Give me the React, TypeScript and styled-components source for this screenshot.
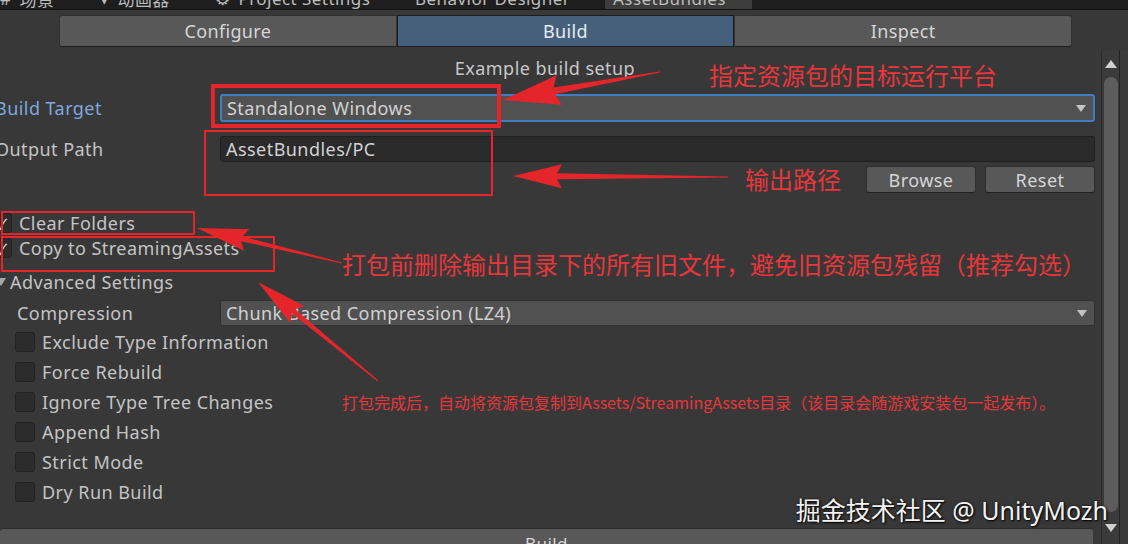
import React from "react";
import styled, { createGlobalStyle } from "styled-components";

const GlobalStyle = createGlobalStyle`
  html, body {
    margin: 0;
    padding: 0;
    background: #383838;
    overflow: hidden;
  }
  body {
    font-family: "Noto Sans", "Noto Sans CJK SC", sans-serif;
  }
`;

const RED = "#e4262b";

const Window = styled.div`
  position: relative;
  width: 1128px;
  height: 544px;
  overflow: hidden;
  background: #383838;
  display: flex;
  flex-direction: column;
  color: #c4c4c4;
  letter-spacing: 0.45px;
`;

/* editor dock tabs, mostly scrolled out of view */
const DockBar = styled.div`
  flex: none;
  height: 22px;
  margin-top: -13px;
  display: flex;
  background: #1e1e1e;
  border-bottom: 1px solid #141414;
`;

const DockTab = styled.div<{ $w: number; $pad: number; $active?: boolean }>`
  width: ${(p) => p.$w}px;
  padding-left: ${(p) => p.$pad}px;
  box-sizing: border-box;
  display: flex;
  align-items: center;
  gap: 8px;
  font-size: 17px;
  color: #bdbdbd;
  background: ${(p) => (p.$active ? "#3c3c3c" : "transparent")};
  white-space: nowrap;
`;

const Toolbar = styled.div`
  flex: none;
  display: flex;
  height: 32px;
  margin: 5px 56px 0 59px;
`;

const ToolButton = styled.div<{ $active?: boolean }>`
  flex: 1;
  display: flex;
  align-items: center;
  justify-content: center;
  font-size: 18px;
  letter-spacing: 0.35px;
  color: ${(p) => (p.$active ? "#e6edf5" : "#d6d6d6")};
  background: ${(p) => (p.$active ? "#46607c" : "#585858")};
  border: 1px solid ${(p) => (p.$active ? "#1c1c1c" : "#303030")};
  border-bottom-color: #1f1f1f;
  &:first-child {
    border-radius: 3px 0 0 3px;
  }
  &:last-child {
    border-radius: 0 3px 3px 0;
  }
`;

const Main = styled.div`
  flex: 1;
  display: flex;
  min-height: 0;
  margin-top: 3px;
`;

const Column = styled.div`
  flex: 1;
  display: flex;
  flex-direction: column;
  min-width: 0;
`;

const ScrollContent = styled.div`
  flex: 1;
  display: flex;
  flex-direction: column;
  padding: 7px 3px 0 0;
  margin-left: -5px;
`;

const Title = styled.div`
  text-align: center;
  font-size: 18px;
  line-height: 22px;
  color: #c8c8c8;
`;

const FieldRow = styled.div<{ $mt: number; $h: number }>`
  display: grid;
  grid-template-columns: 225px 1fr;
  align-items: center;
  height: ${(p) => p.$h}px;
  margin-top: ${(p) => p.$mt}px;
`;

const Label = styled.div<{ $accent?: boolean; $indent?: number }>`
  font-size: 18px;
  padding-left: ${(p) => p.$indent ?? 0}px;
  color: ${(p) => (p.$accent ? "#7fa6df" : "#c4c4c4")};
  white-space: nowrap;
`;

const Dropdown = styled.div<{ $focused?: boolean }>`
  height: 100%;
  box-sizing: border-box;
  display: flex;
  align-items: center;
  justify-content: space-between;
  padding: 0 7px 0 5px;
  font-size: 18px;
  color: #d2d2d2;
  background: #515151;
  border: ${(p) => (p.$focused ? "2px solid #3f7cc0" : "1px solid #2f2f2f")};
  border-radius: 3px;
`;

const Caret = styled.span`
  width: 0;
  height: 0;
  border-left: 5px solid transparent;
  border-right: 5px solid transparent;
  border-top: 7px solid #c4c4c4;
`;

const TextField = styled.div`
  height: 100%;
  box-sizing: border-box;
  display: flex;
  align-items: center;
  padding-left: 5px;
  font-size: 18px;
  color: #d2d2d2;
  background: #2a2a2a;
  border: 1px solid #1f1f1f;
  border-radius: 3px;
`;

const ButtonRow = styled.div`
  display: flex;
  justify-content: flex-end;
  gap: 9px;
  margin-top: 5px;
  height: 27px;
`;

const SmallButton = styled.div`
  width: 108px;
  display: flex;
  align-items: center;
  justify-content: center;
  font-size: 18px;
  color: #d6d6d6;
  background: #585858;
  border: 1px solid #2f2f2f;
  border-bottom-color: #222;
  border-radius: 3px;
`;

const CheckRow = styled.div<{ $mt: number; $h: number; $indent: number }>`
  display: flex;
  align-items: center;
  gap: 7px;
  height: ${(p) => p.$h}px;
  margin-top: ${(p) => p.$mt}px;
  margin-left: ${(p) => p.$indent}px;
  font-size: 18px;
  color: #c4c4c4;
`;

const Box = styled.span`
  flex: none;
  width: 20px;
  height: 20px;
  box-sizing: border-box;
  display: flex;
  align-items: center;
  justify-content: center;
  background: #2c2c2c;
  border: 1px solid #232323;
  border-radius: 3px;
  color: #e6e6e6;
  font-size: 15px;
`;

const Foldout = styled.div<{ $mt: number }>`
  display: flex;
  align-items: center;
  gap: 4px;
  height: 22px;
  margin-top: ${(p) => p.$mt}px;
  margin-left: 1px;
  font-size: 18px;
  color: #c4c4c4;
`;

const FoldCaret = styled.span`
  width: 0;
  height: 0;
  border-left: 5px solid transparent;
  border-right: 5px solid transparent;
  border-top: 8px solid #a8a8a8;
`;

const BuildBar = styled.div`
  flex: none;
  height: 28px;
  margin: 0 5px -13px 0;
  display: flex;
  align-items: center;
  justify-content: center;
  font-size: 17px;
  color: #d6d6d6;
  background: #585858;
  border-top: 1px solid #2a2a2a;
  border-radius: 3px 3px 0 0;
`;

const Scrollbar = styled.div`
  flex: none;
  width: 17px;
  margin-left: 3px;
  display: flex;
  flex-direction: column;
  align-items: center;
  background: #3a3a3a;
  border-left: 1px solid #2c2c2c;
`;

const ScrollArrow = styled.div<{ $h: number; $down?: boolean }>`
  flex: none;
  height: ${(p) => p.$h}px;
  display: flex;
  align-items: center;
  justify-content: center;
  &::after {
    content: "";
    border-left: 6px solid transparent;
    border-right: 6px solid transparent;
    ${(p) =>
      p.$down
        ? "border-top: 8px solid #d0d0d0;"
        : "border-bottom: 8px solid #d0d0d0;"}
  }
`;

const Thumb = styled.div`
  flex: 1;
  width: 14px;
  background: #5c5c5c;
  border-radius: 7px;
`;

const RightEdge = styled.div`
  flex: none;
  width: 8px;
  background: #3a3a3a;
  border-left: 1px solid #232323;
`;

/* red callouts drawn on top of the screenshot */
const Overlay = styled.svg`
  position: absolute;
  left: 0;
  top: 0;
  pointer-events: none;
`;

const Note = styled.div<{ $x: number; $y: number; $size: number }>`
  position: absolute;
  left: ${(p) => p.$x}px;
  top: ${(p) => p.$y}px;
  font-family: "Noto Sans CJK SC", "Noto Sans", sans-serif;
  font-size: ${(p) => p.$size}px;
  line-height: ${(p) => p.$size + 4}px;
  letter-spacing: 0;
  color: #e8363b;
  white-space: nowrap;
`;

const Watermark = styled.div`
  position: absolute;
  right: 20px;
  top: 495px;
  font-family: "Noto Sans", "Noto Sans CJK SC", sans-serif;
  font-size: 25px;
  line-height: 30px;
  letter-spacing: 0;
  color: #f2f2f2;
  text-shadow: 1px 1px 2px #000, 0 0 3px rgba(0, 0, 0, 0.6);
  white-space: nowrap;
`;

const arrow = (
  tx: number,
  ty: number,
  hx: number,
  hy: number,
  headLen: number,
  headW: number,
  shaftW: number
) => {
  const dx = hx - tx;
  const dy = hy - ty;
  const len = Math.hypot(dx, dy);
  const ux = dx / len;
  const uy = dy / len;
  const nx = -uy;
  const ny = ux;
  const bx = hx - ux * headLen;
  const by = hy - uy * headLen;
  const back = 5;
  const pts = [
    [tx + nx * 0.6, ty + ny * 0.6],
    [bx + nx * (shaftW / 2), by + ny * (shaftW / 2)],
    [bx - ux * back + nx * (headW / 2), by - uy * back + ny * (headW / 2)],
    [hx, hy],
    [bx - ux * back - nx * (headW / 2), by - uy * back - ny * (headW / 2)],
    [bx - nx * (shaftW / 2), by - ny * (shaftW / 2)],
    [tx - nx * 0.6, ty - ny * 0.6],
  ];
  return pts.map((p) => p.map((v) => v.toFixed(1)).join(",")).join(" ");
};

const dockTabs = [
  { w: 95, pad: 0, icon: "#", label: "场景" },
  { w: 115, pad: 5, icon: "▾", label: "动画器" },
  { w: 185, pad: 5, icon: "⚙", label: "Project Settings" },
  { w: 210, pad: 20, icon: "", label: "Behavior Designer" },
  { w: 147, pad: 8, icon: "", label: "AssetBundles", active: true },
];

const advanced = [
  "Exclude Type Information",
  "Force Rebuild",
  "Ignore Type Tree Changes",
  "Append Hash",
  "Strict Mode",
  "Dry Run Build",
];

const App: React.FC = () => {
  return (
    <Window>
      <GlobalStyle />
      <DockBar>
        {dockTabs.map((t) => (
          <DockTab key={t.label} $w={t.w} $pad={t.pad} $active={t.active}>
            {t.icon && <span>{t.icon}</span>}
            <span>{t.label}</span>
          </DockTab>
        ))}
      </DockBar>

      <Toolbar>
        <ToolButton>Configure</ToolButton>
        <ToolButton $active>Build</ToolButton>
        <ToolButton>Inspect</ToolButton>
      </Toolbar>

      <Main>
        <Column>
          <ScrollContent>
            <Title>Example build setup</Title>

            <FieldRow $mt={15} $h={27}>
              <Label $accent>Build Target</Label>
              <Dropdown $focused>
                <span>Standalone Windows</span>
                <Caret />
              </Dropdown>
            </FieldRow>

            <FieldRow $mt={15} $h={25}>
              <Label>Output Path</Label>
              <TextField>AssetBundles/PC</TextField>
            </FieldRow>

            <ButtonRow>
              <SmallButton>Browse</SmallButton>
              <SmallButton>Reset</SmallButton>
            </ButtonRow>

            <CheckRow $mt={19} $h={22} $indent={-3}>
              <Box>✓</Box>
              Clear Folders
            </CheckRow>
            <CheckRow $mt={3} $h={22} $indent={-3}>
              <Box>✓</Box>
              Copy to StreamingAssets
            </CheckRow>

            <Foldout $mt={12}>
              <FoldCaret />
              Advanced Settings
            </Foldout>

            <FieldRow $mt={7} $h={24}>
              <Label $indent={22}>Compression</Label>
              <Dropdown>
                <span>Chunk Based Compression (LZ4)</span>
                <Caret />
              </Dropdown>
            </FieldRow>

            {advanced.map((name, i) => (
              <CheckRow key={name} $mt={i === 0 ? 3 : 0} $h={30} $indent={20}>
                <Box />
                {name}
              </CheckRow>
            ))}
          </ScrollContent>
          <BuildBar>Build</BuildBar>
        </Column>

        <Scrollbar>
          <ScrollArrow $h={27} />
          <Thumb />
          <ScrollArrow $h={32} $down />
        </Scrollbar>
        <RightEdge />
      </Main>

      <Overlay width={1128} height={544} viewBox="0 0 1128 544">
        <rect x={213} y={86} width={286} height={40} fill="none" stroke={RED} strokeWidth={4} />
        <rect x={205} y={131} width={287} height={64} fill="none" stroke={RED} strokeWidth={2} />
        <rect x={2} y={212} width={192} height={22} fill="none" stroke={RED} strokeWidth={2} />
        <rect x={2} y={237} width={272} height={34} fill="none" stroke={RED} strokeWidth={2} />
        <polygon points={arrow(660, 72, 503, 100, 52, 30, 7)} fill={RED} />
        <polygon points={arrow(728, 177, 513, 176, 44, 24, 6)} fill={RED} />
        <polygon points={arrow(342, 263, 197, 228, 46, 22, 5)} fill={RED} />
        <polygon points={arrow(378, 381, 258, 282, 46, 22, 5)} fill={RED} />
      </Overlay>

      <Note $x={709} $y={61} $size={24}>
        指定资源包的目标运行平台
      </Note>
      <Note $x={745} $y={165} $size={24}>
        输出路径
      </Note>
      <Note $x={342} $y={250} $size={24}>
        打包前删除输出目录下的所有旧文件，避免旧资源包残留（推荐勾选）
      </Note>
      <Note $x={342} $y={392} $size={16}>
        打包完成后，自动将资源包复制到Assets/StreamingAssets目录（该目录会随游戏安装包一起发布）。
      </Note>

      <Watermark>掘金技术社区 @ UnityMozh</Watermark>
    </Window>
  );
};

export default App;
